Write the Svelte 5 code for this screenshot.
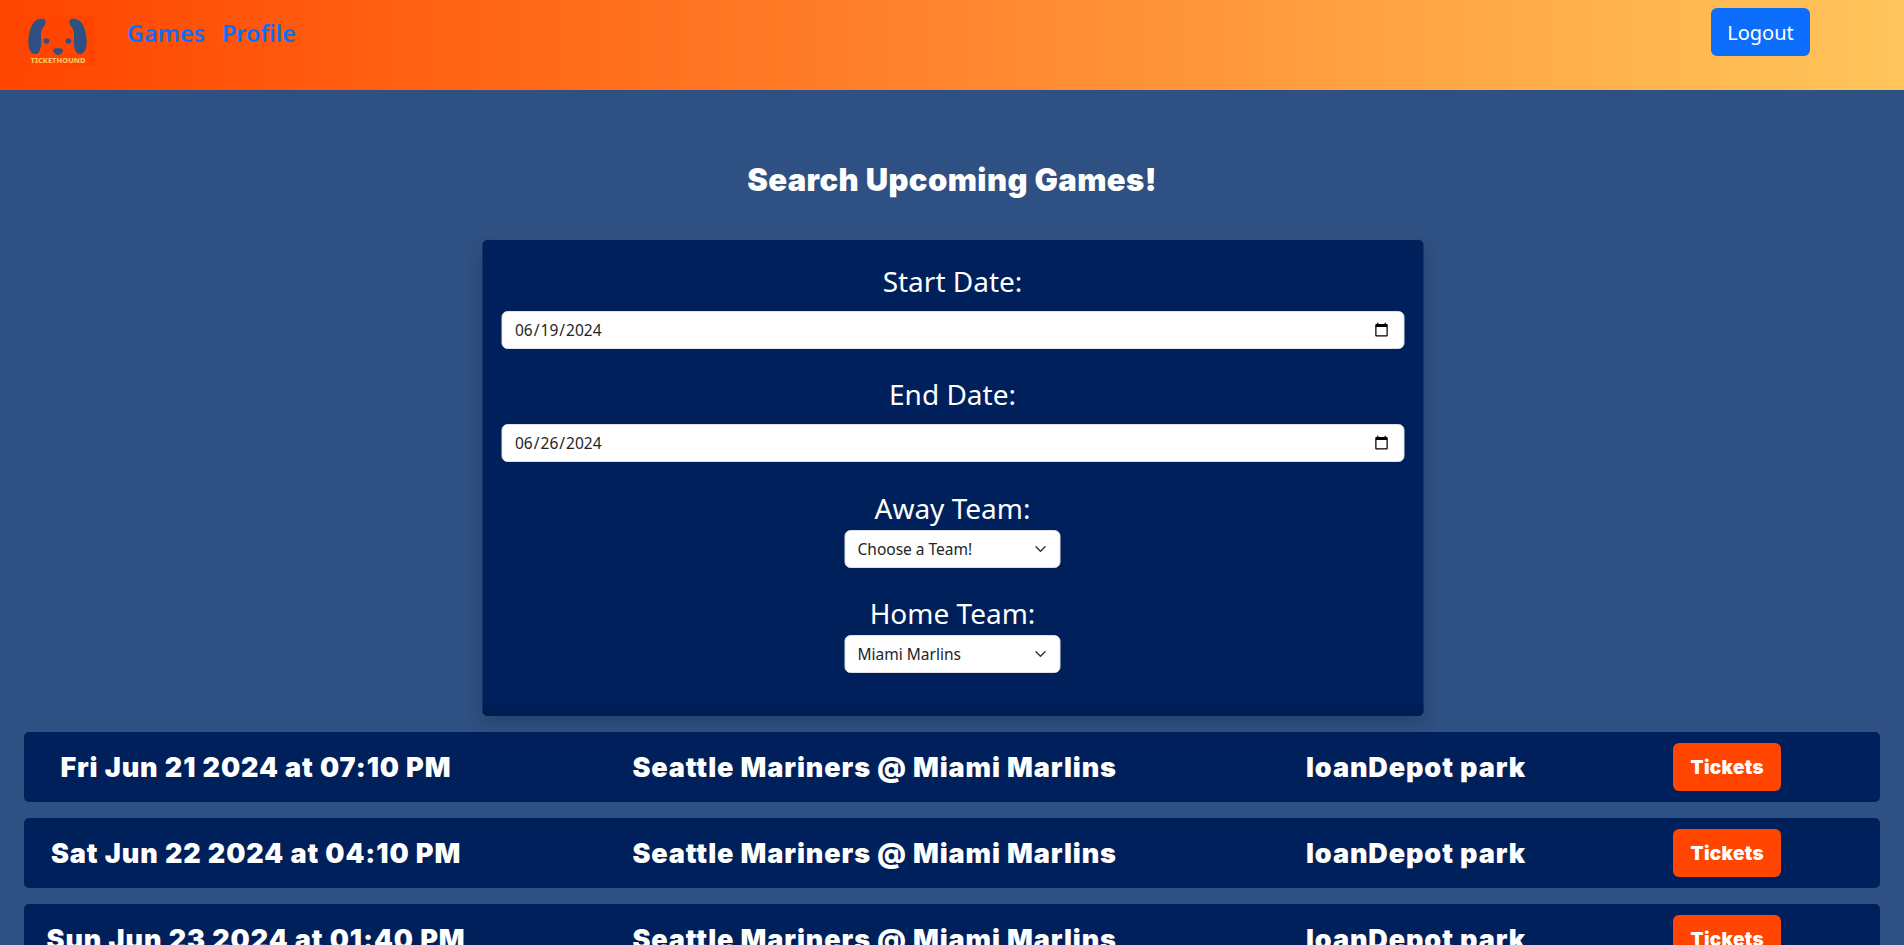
<script>
  const games = [
    { date: "Fri Jun 21 2024 at 07:10 PM", match: "Seattle Mariners @ Miami Marlins", venue: "loanDepot park" },
    { date: "Sat Jun 22 2024 at 04:10 PM", match: "Seattle Mariners @ Miami Marlins", venue: "loanDepot park" },
    { date: "Sun Jun 23 2024 at 01:40 PM", match: "Seattle Mariners @ Miami Marlins", venue: "loanDepot park" }
  ];

  let startDate = $state("2024-06-19");
  let endDate = $state("2024-06-26");
  let awayTeam = $state("");
  let homeTeam = $state("Miami Marlins");
</script>

<nav class="topbar">
  <svg class="logo" viewBox="23 16 72 50" aria-label="TicketHound logo">
    <rect x="23" y="16" width="72" height="50" fill="#ff4500" />
    <path class="ear" d="M44 19C36 17 30 24 28.5 38C27.5 47 30 54 35 54C40 54 42 46 41 38C40.5 32 42 28 45 25C46 23 46 20 44 19Z" />
    <path class="ear" d="M71 19C79 17 85 24 86.5 38C87.500 47 85 54 80 54C75 54 73 46 74 38C74.500 32 73 28 70 25C69 23 69 20 71 19Z" />
    <circle class="ear" cx="46.500" cy="41" r="2.800" />
    <circle class="ear" cx="68.500" cy="41" r="2.800" />
    <path class="ear" d="M53 49.500C55 47.800 61 47.800 63 49.500C63.500 52 60.500 55 58 55C55.500 55 52.500 52 53 49.500Z" />
    <text x="58" y="63" text-anchor="middle" class="logo-text">TICKETHOUND</text>
  </svg>
  <div class="links">
    <a href="#games">Games</a>
    <a href="#profile">Profile</a>
  </div>
  <button class="logout">Logout</button>
</nav>

<main>
  <h2>Search Upcoming Games!</h2>

  <section class="panel">
    <form class="fields">
      <div class="field date">
        <label for="start">Start Date:</label>
        <input id="start" type="date" bind:value={startDate} />
      </div>
      <div class="field date">
        <label for="end">End Date:</label>
        <input id="end" type="date" bind:value={endDate} />
      </div>
      <div class="field team">
        <label for="away">Away Team:</label>
        <div class="select-wrap">
          <select id="away" bind:value={awayTeam}>
            <option value="">Choose a Team!</option>
            <option>Seattle Mariners</option>
          </select>
          <svg class="chevron" viewBox="0 0 16 16"><path d="m2 5 6 6 6-6" /></svg>
        </div>
      </div>
      <div class="field team">
        <label for="home">Home Team:</label>
        <div class="select-wrap">
          <select id="home" bind:value={homeTeam}>
            <option value="">Choose a Team!</option>
            <option>Miami Marlins</option>
          </select>
          <svg class="chevron" viewBox="0 0 16 16"><path d="m2 5 6 6 6-6" /></svg>
        </div>
      </div>
    </form>
    <div class="panel-foot"></div>
  </section>

  <div class="games">
    {#each games as game}
      <div class="game">
        <div>{game.date}</div>
        <div>{game.match}</div>
        <div>{game.venue}</div>
        <div class="action"><button class="tickets">Tickets</button></div>
      </div>
    {/each}
  </div>
</main>

<style>
  :global(body) {
    background-color: #2e5082;
    font-family: "Noto Sans", sans-serif;
    overflow: hidden;
  }

  .topbar {
    display: flex;
    align-items: flex-start;
    height: 90px;
    background: linear-gradient(to right, #ff4500, #ffc65c);
  }

  .logo {
    width: 72px;
    height: 50px;
    margin: 16px 0 0 23px;
  }

  .ear {
    fill: #2e5082;
  }

  .logo-text {
    font-family: "Noto Sans", sans-serif;
    font-size: 7.500px;
    font-weight: 800;
    fill: #ffc65c;
  }

  .links {
    display: flex;
    gap: 17px;
    margin: 15px 0 0 32px;
  }

  .links a {
    color: #0d6efd;
    font-size: 23.300px;
    font-weight: 600;
    line-height: 36px;
    text-decoration: none;
  }

  .logout {
    margin: 8px 94px 0 auto;
    width: 99px;
    height: 48px;
    border: 0;
    border-radius: 6px;
    background-color: #0d6efd;
    color: #fff;
    font-family: inherit;
    font-size: 20px;
  }

  h2 {
    margin: 0;
    padding-top: 73px;
    margin-bottom: 43px;
    color: #fff;
    font-family: Inter, sans-serif;
    font-size: 31px;
    font-weight: 900;
    letter-spacing: 0.4px;
    line-height: 34px;
    text-align: center;
  }

  .panel {
    width: 941px;
    margin: 0 auto 16px;
    transform: translateX(0.5px);
    border-radius: 5px;
    overflow: hidden;
    background-color: #00205b;
    box-shadow: 0 8px 16px rgba(0, 0, 0, 0.15);
  }

  .fields {
    padding: 20px 19px 32px;
  }

  .field {
    display: flex;
    flex-direction: column;
    align-items: center;
  }

  .field label {
    color: #fff;
    font-size: 28px;
    line-height: 42px;
  }

  .date {
    margin-bottom: 24px;
  }

  .date label {
    margin-bottom: 9px;
  }

  .date + .team {
    padding-top: 1px;
  }

  .team {
    margin-bottom: 24px;
  }

  .team label {
    margin-bottom: 1px;
  }

  .team:last-child {
    margin-bottom: 0;
  }

  input {
    box-sizing: border-box;
    width: 100%;
    height: 38px;
    padding: 6px 12px;
    border: 1px solid #dee2e6;
    border-radius: 6px;
    background-color: #fff;
    color: #212529;
    font-family: inherit;
    font-size: 15.500px;
  }

  .select-wrap {
    position: relative;
    width: 216px;
    height: 38px;
  }

  select {
    box-sizing: border-box;
    width: 100%;
    height: 38px;
    padding: 6px 36px 6px 12px;
    border: 1px solid #dee2e6;
    border-radius: 6px;
    background-color: #fff;
    color: #212529;
    font-family: inherit;
    font-size: 15.500px;
    appearance: none;
  }

  .chevron {
    position: absolute;
    top: 13px;
    right: 12px;
    width: 16px;
    height: 12px;
    pointer-events: none;
  }

  .chevron path {
    fill: none;
    stroke: #343a40;
    stroke-width: 2;
    stroke-linecap: round;
    stroke-linejoin: round;
  }

  .panel-foot {
    height: 11px;
    background-color: #001d53;
  }

  .games {
    display: flex;
    flex-direction: column;
    gap: 16px;
    margin: 0 24px;
  }

  .game {
    display: grid;
    grid-template-columns: 3fr 5fr 2fr 2fr;
    align-items: center;
    height: 70px;
    border-radius: 5px;
    background-color: #00205b;
    color: #fff;
    font-family: Inter, sans-serif;
    font-size: 27px;
    font-weight: 900;
    letter-spacing: 0.9px;
    text-align: center;
  }

  .action {
    padding-left: 4px;
  }

  .tickets {
    width: 108px;
    height: 48px;
    border: 0;
    border-radius: 6px;
    background-color: #ff4500;
    color: #fff;
    font-family: inherit;
    font-size: 19px;
    font-weight: 900;
    letter-spacing: 0.3px;
  }
</style>
